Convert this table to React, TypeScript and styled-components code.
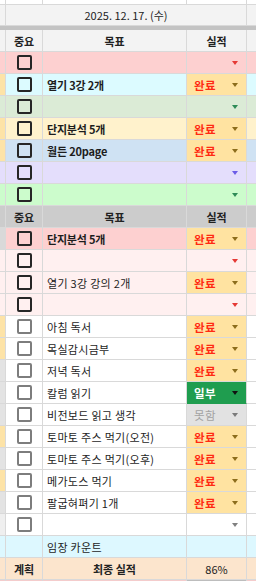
import styled, { createGlobalStyle } from "styled-components";

type Status = "done" | "part" | "miss" | null;

type Goal = {
  bg: string;
  lead: string;
  text?: string;
  bold?: boolean;
  status: Status;
  caret?: string;
  box: "dark" | "gray" | "none";
};

const LINE = "#d9d9d9";

const topGoals: Goal[] = [
  { bg: "#fdd0d0", lead: "#fdd0d0", status: null, caret: "#e53935", box: "dark" },
  { bg: "#dcfbff", lead: "#fde3a7", text: "열기 3강 2개", bold: true, status: "done", box: "dark" },
  { bg: "#dbebd6", lead: "#dbebd6", status: null, caret: "#2e8b57", box: "dark" },
  { bg: "#fff2cc", lead: "#fde3a7", text: "단지분석 5개", bold: true, status: "done", box: "dark" },
  { bg: "#cfe2f3", lead: "#fde3a7", text: "월든 20page", bold: true, status: "done", box: "dark" },
  { bg: "#e4defc", lead: "#e4defc", status: null, caret: "#6c5ce7", box: "dark" },
  { bg: "#ccfccc", lead: "#ccfccc", status: null, caret: "#2e8b57", box: "dark" },
];

const dailyGoals: Goal[] = [
  { bg: "#fdd0d0", lead: "#d9d9d9", text: "단지분석 5개", bold: true, status: "done", box: "dark" },
  { bg: "#fff0f0", lead: "#fff0f0", status: null, caret: "#e53935", box: "dark" },
  { bg: "#fff0f0", lead: "#fff0f0", text: "열기 3강 강의 2개", status: "done", box: "dark" },
  { bg: "#fff0f0", lead: "#fff0f0", status: null, caret: "#e53935", box: "dark" },
  { bg: "#ffffff", lead: "#fde3a7", text: "아침 독서", status: "done", box: "gray" },
  { bg: "#ffffff", lead: "#fde3a7", text: "목실감시금부", status: "done", box: "gray" },
  { bg: "#ffffff", lead: "#e3e3e3", text: "저녁 독서", status: "done", box: "gray" },
  { bg: "#ffffff", lead: "#e3e3e3", text: "칼럼 읽기", status: "part", box: "gray" },
  { bg: "#ffffff", lead: "#e3e3e3", text: "비전보드 읽고 생각", status: "miss", box: "gray" },
  { bg: "#ffffff", lead: "#fde3a7", text: "토마토 주스 먹기(오전)", status: "done", box: "gray" },
  { bg: "#ffffff", lead: "#e3e3e3", text: "토마토 주스 먹기(오후)", status: "done", box: "gray" },
  { bg: "#ffffff", lead: "#fde3a7", text: "메가도스 먹기", status: "done", box: "gray" },
  { bg: "#ffffff", lead: "#e3e3e3", text: "팔굽혀펴기 1개", status: "done", box: "gray" },
  { bg: "#ffffff", lead: "#efefef", status: null, caret: "#808080", box: "gray" },
];

const GlobalStyle = createGlobalStyle`
  body {
    margin: 0;
    background: #ffffff;
    font-family: "Noto Sans CJK KR", "Noto Sans", sans-serif;
    color: #222;
  }
`;

const Sheet = styled.div`
  width: 256px;
  height: 581px;
  overflow: hidden;
  display: flex;
  flex-direction: column;
`;

const Row = styled.div<{ $h?: number }>`
  display: grid;
  grid-template-columns: 6px 37px 144px 60px 9px;
  height: ${(p) => p.$h ?? 22}px;
  flex-shrink: 0;
`;

const Cell = styled.div<{ $bg?: string; $span?: string }>`
  box-sizing: border-box;
  background: ${(p) => p.$bg ?? "#ffffff"};
  border-right: 1px solid ${LINE};
  border-bottom: 1px solid ${LINE};
  grid-column: ${(p) => p.$span ?? "auto"};
  display: flex;
  align-items: center;
  overflow: hidden;
  white-space: nowrap;
  min-width: 0;
`;

const Center = styled(Cell)<{ $bold?: boolean; $size?: number }>`
  justify-content: center;
  font-size: ${(p) => p.$size ?? 11}px;
  font-weight: ${(p) => (p.$bold ? 700 : 400)};
`;

const GoalText = styled(Cell)<{ $bold?: boolean }>`
  padding-left: 4px;
  font-size: 11px;
  font-weight: ${(p) => (p.$bold ? 700 : 400)};
  letter-spacing: ${(p) => (p.$bold ? "-0.2px" : "0.3px")};
  color: #1d1d1d;
`;

const Edge = styled(Cell)`
  border-right: none;
`;

const Separator = styled.div`
  height: 4px;
  flex-shrink: 0;
  background: #c3c3c3;
`;

const Box = styled.span<{ $dark: boolean }>`
  box-sizing: border-box;
  width: 15px;
  height: 15px;
  border-radius: 2px;
  border: 2px solid ${(p) => (p.$dark ? "#262626" : "#7d7d7d")};
  background: transparent;
`;

const chipBg: Record<string, string> = {
  done: "#ffe3a1",
  part: "#1f9d4f",
  miss: "#e2e2e2",
};

const chipColor: Record<string, string> = {
  done: "#ff2a12",
  part: "#ffffff",
  miss: "#a3a3a3",
};

const caretColor: Record<string, string> = {
  done: "#8c6d1c",
  part: "#111111",
  miss: "#7a7a7a",
};

const StatusCell = styled(Cell)<{ $status: Status }>`
  justify-content: space-between;
  padding: 0 8px 0 7px;
  background: ${(p) => (p.$status ? chipBg[p.$status] : undefined)};
  border-bottom-color: ${(p) => (p.$status === "part" ? "#1f9d4f" : LINE)};
`;

const StatusLabel = styled.span<{ $status: Status }>`
  font-size: 11.5px;
  font-weight: ${(p) => (p.$status === "miss" ? 400 : 700)};
  color: ${(p) => (p.$status ? chipColor[p.$status] : "#222")};
  letter-spacing: 0.5px;
`;

const Caret = styled.span<{ $color: string }>`
  width: 0;
  height: 0;
  margin-left: auto;
  border-left: 3.5px solid transparent;
  border-right: 3.5px solid transparent;
  border-top: 4px solid ${(p) => p.$color};
`;

const labels: Record<string, string> = { done: "완료", part: "일부", miss: "못함" };

function GoalRow({ g }: { g: Goal }) {
  return (
    <Row>
      <Cell $bg={g.lead} />
      <Center $bg={g.bg}>{g.box !== "none" && <Box $dark={g.box === "dark"} />}</Center>
      <GoalText $bg={g.bg} $bold={g.bold}>
        {g.text}
      </GoalText>
      <StatusCell $bg={g.bg} $status={g.status}>
        {g.status && <StatusLabel $status={g.status}>{labels[g.status]}</StatusLabel>}
        <Caret $color={g.status ? caretColor[g.status] : g.caret ?? "#777"} />
      </StatusCell>
      <Edge $bg={g.bg} />
    </Row>
  );
}

function HeaderRow({ bg }: { bg: string }) {
  return (
    <Row>
      <Cell $bg={bg} />
      <Center $bg={bg} $bold>
        중요
      </Center>
      <Center $bg={bg} $bold>
        목표
      </Center>
      <Center $bg={bg} $bold>
        실적
      </Center>
      <Edge $bg={bg} />
    </Row>
  );
}

export default function App() {
  return (
    <Sheet>
      <GlobalStyle />
      <Row $h={5}>
        <Cell />
        <Cell />
        <Cell />
        <Cell />
        <Edge />
      </Row>
      <Row $h={21}>
        <Cell $bg="#f3f3f3" />
        <Center $bg="#f3f3f3" $span="2 / 5" $size={11}>
          2025. 12. 17. (수)
        </Center>
        <Edge $bg="#f3f3f3" />
      </Row>
      <Separator />
      <HeaderRow bg="#f3f3f3" />
      {topGoals.map((g, i) => (
        <GoalRow key={`t${i}`} g={g} />
      ))}
      <HeaderRow bg="#cccccc" />
      {dailyGoals.map((g, i) => (
        <GoalRow key={`d${i}`} g={g} />
      ))}
      <Row>
        <Cell $bg="#ddf8ff" />
        <Cell $bg="#ddf8ff" />
        <GoalText $bg="#ddf8ff">임장 카운트</GoalText>
        <Cell $bg="#ddf8ff" />
        <Edge $bg="#ddf8ff" />
      </Row>
      <Row>
        <Cell $bg="#fce5cd" />
        <Center $bg="#fce5cd" $bold>
          계획
        </Center>
        <Center $bg="#fce5cd" $bold>
          최종 실적
        </Center>
        <Center $bg="#fce5cd" $size={11}>
          86%
        </Center>
        <Edge $bg="#fce5cd" />
      </Row>
      <Row $h={4}>
        <Cell $bg="#f4cccc" />
        <Cell $bg="#f4cccc" />
        <Cell $bg="#f4cccc" />
        <Cell $bg="#bdbdbd" />
        <Edge $bg="#f4cccc" />
      </Row>
    </Sheet>
  );
}
